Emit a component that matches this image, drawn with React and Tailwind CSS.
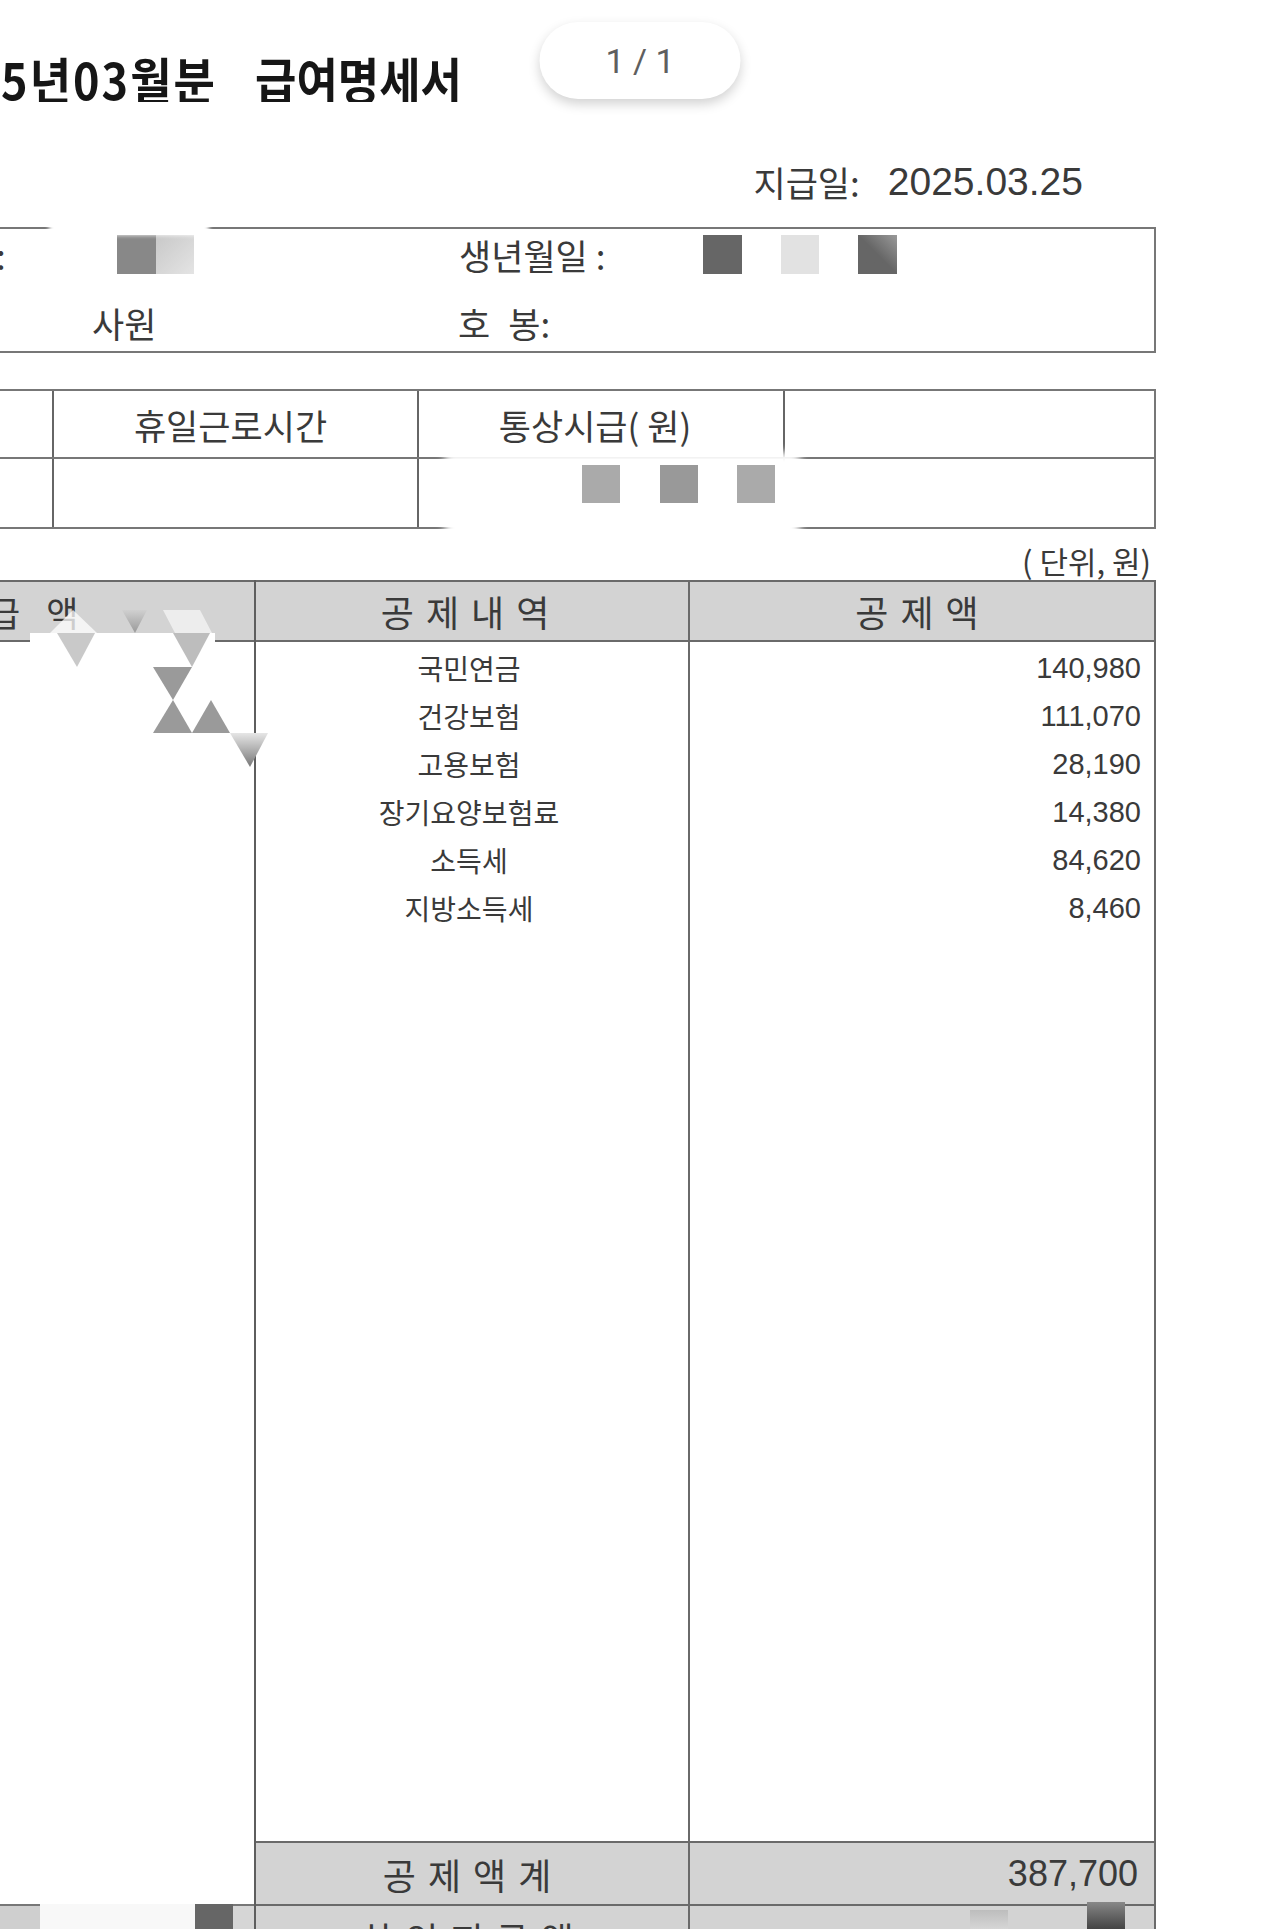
export default function App() {
  const rows = [
    ["국민연금", "140,980"],
    ["건강보험", "111,070"],
    ["고용보험", "28,190"],
    ["장기요양보험료", "14,380"],
    ["소득세", "84,620"],
    ["지방소득세", "8,460"],
  ];
  return (
    <div className="relative w-[1280px] h-[1929px] overflow-hidden bg-white text-[#3a3a3a] font-['Noto_Sans_CJK_KR',sans-serif]">
      <div className="w-[1156px]">
        {/* title */}
        <div className="h-[156px] pt-[54px]">
          <div className="w-[462px] h-[48px] overflow-hidden flex justify-end items-center whitespace-nowrap text-[45px] font-bold text-[#161616] leading-none">
            <span className="inline-block scale-y-[1.12]">
              <span className="tracking-[2px]">2025</span><span className="tracking-[2px]">년03월</span>분<span className="ml-[40px]">급여명세서</span>
            </span>
          </div>
        </div>

        {/* pay date */}
        <div className="h-[50px] flex items-center justify-end pr-[73px] whitespace-nowrap">
          <span className="text-[35px] leading-none">지급일:</span>
          <span className="ml-[28px] text-[39px] leading-none font-['Liberation_Sans',Arial,sans-serif]">2025.03.25</span>
        </div>

        {/* box 1 */}
        <div className="mt-[21px] h-[126px] border-t-2 border-b-2 border-r-2 border-[#777] flex flex-col">
          <div className="h-[50px] flex items-center whitespace-nowrap">
            <span className="w-[121px] -ml-[4px] text-[35px] leading-none">:</span>
            <div className="w-[39px] h-[39px] bg-[#888]" />
            <div className="w-[38px] h-[39px] bg-gradient-to-br from-[#c8c8c8] to-[#e4e4e4]" />
            <span className="ml-[265px] w-[244px] text-[35px] leading-none">생년월일 :</span>
            <div className="w-[39px] h-[39px] bg-[#666]" />
            <div className="ml-[39px] w-[38px] h-[39px] bg-[#e2e2e2]" />
            <div className="ml-[39px] w-[39px] h-[39px] bg-gradient-to-bl from-[#9a9a9a] via-[#666] to-[#666]" />
          </div>
          <div className="flex-1 pt-[14px] flex items-center whitespace-nowrap text-[35px] leading-none">
            <span className="ml-[92px] w-[366px]">사원</span>
            <span>호</span>
            <span className="ml-[18px]">봉:</span>
          </div>
        </div>

        {/* box 2 */}
        <div className="mt-[36px] border-t-2 border-b-2 border-[#777] text-[35px] leading-none">
          <div className="h-[68px] flex border-b-2 border-[#777]">
            <div className="w-[54px] border-r-2 border-[#666]" />
            <div className="w-[365px] border-r-2 border-[#666] flex items-center justify-center pr-[10px]">휴일근로시간</div>
            <div className="w-[366px] border-r-2 border-[#666] flex items-center justify-center pr-[12px] whitespace-nowrap">통상시급( 원)</div>
            <div className="flex-1 border-r-2 border-[#777]" />
          </div>
          <div className="h-[68px] flex">
            <div className="w-[54px] border-r-2 border-[#666]" />
            <div className="w-[365px] border-r-2 border-[#666]" />
            <div className="w-[366px] border-r-2 border-[#666] flex items-start pt-[6px] pl-[163px]">
              <div className="relative z-10 w-[38px] h-[38px] bg-[#aaa]" />
              <div className="relative z-10 ml-[40px] w-[38px] h-[38px] bg-[#999]" />
              <div className="relative z-10 ml-[39px] w-[38px] h-[38px] bg-[#aaa]" />
            </div>
            <div className="flex-1 border-r-2 border-[#777]" />
          </div>
        </div>

        {/* unit */}
        <div className="h-[51px] pt-[12px] flex items-center justify-end pr-[5px] text-[31px] leading-none whitespace-nowrap">
          ( 단위, 원)
        </div>

        {/* main table */}
        <div className="flex">
          {/* col 1 */}
          <div className="w-[254px] flex flex-col">
            <div className="h-[62px] border-t-2 border-b-2 border-[#6a6a6a] bg-[#d3d3d3] flex items-center text-[35px] leading-none whitespace-nowrap">
              <span className="-ml-[12px]">급</span>
              <span className="ml-[26px]">액</span>
            </div>
            <div className="h-[1199px]" />
            <div className="h-[63px]" />
            <div className="h-[66px] flex">
              <div className="w-[40px] border-t-2 border-[#777] bg-[#cfcfcf]" />
              <div className="w-[155px] bg-[#f8f8f8]" />
              <div className="w-[38px] bg-[#666]" />
              <div className="flex-1 border-t-2 border-[#777] bg-[#d6d6d6]" />
            </div>
          </div>

          {/* col 2 */}
          <div className="w-[434px] border-l-2 border-[#5e5e5e] flex flex-col">
            <div className="h-[62px] border-t-2 border-b-2 border-[#6a6a6a] bg-[#d3d3d3] flex items-center justify-center gap-[12px] pr-[14px] text-[36px] leading-none">
              <span>공</span><span>제</span><span>내</span><span>역</span>
            </div>
            <div className="h-[1199px] pt-[2px]">
              {rows.map(([name]) => (
                <div key={name} className="h-[48px] flex items-center justify-center pr-[6px] text-[28px] leading-none">
                  {name}
                </div>
              ))}
            </div>
            <div className="h-[65px] border-t-2 border-b-2 border-[#6a6a6a] bg-[#d3d3d3] flex items-center justify-center gap-[12px] pr-[10px] text-[36px] leading-none">
              <span>공</span><span>제</span><span>액</span><span>계</span>
            </div>
            <div className="h-[64px] bg-[#d3d3d3] flex items-center justify-center gap-[12px] pr-[10px] text-[36px] leading-none">
              <span>차</span><span>인</span><span>지</span><span>급</span><span>액</span>
            </div>
          </div>

          {/* col 3 */}
          <div className="w-[468px] border-l-2 border-r-2 border-[#6a6a6a] flex flex-col">
            <div className="h-[62px] border-t-2 border-b-2 border-[#6a6a6a] bg-[#d3d3d3] flex items-center justify-center gap-[12px] pr-[10px] text-[36px] leading-none">
              <span>공</span><span>제</span><span>액</span>
            </div>
            <div className="h-[1199px] pt-[2px]">
              {rows.map(([name, amt]) => (
                <div key={name} className="h-[48px] flex items-center justify-end pr-[13px] text-[29px] leading-none font-['Liberation_Sans',Arial,sans-serif]">
                  {amt}
                </div>
              ))}
            </div>
            <div className="h-[65px] border-t-2 border-b-2 border-[#6a6a6a] bg-[#d3d3d3] flex items-center justify-end pr-[16px] text-[36px] leading-none font-['Liberation_Sans',Arial,sans-serif]">
              387,700
            </div>
            <div className="h-[64px] bg-[#d3d3d3]" />
          </div>
        </div>
      </div>

      {/* faded patches over lines */}
      <div className="absolute left-[49px] top-[221px] w-[160px] h-[14px] bg-white blur-[2px]" />
      <div className="absolute left-[445px] top-[452px] w-[355px] h-[88px] bg-white blur-[4px]" />

      {/* redaction mosaic over header */}
      <svg className="absolute left-0 top-[570px]" width="280" height="200" viewBox="0 0 280 200">
        <defs>
          <linearGradient id="g1" x1="0" y1="0" x2="0" y2="1">
            <stop offset="0" stopColor="#e6e6e6" />
            <stop offset="1" stopColor="#777" />
          </linearGradient>
          <linearGradient id="g2" x1="0" y1="0" x2="0" y2="1">
            <stop offset="0" stopColor="#d0d0d0" />
            <stop offset="1" stopColor="#999" />
          </linearGradient>
        </defs>
        <rect x="30" y="63" width="185" height="11" fill="#fff" />
        <polygon points="50,63 97,63 73,40" fill="#fff" opacity="0.75" />
        <polygon points="163,40 200,40 212,63 175,63" fill="#fff" opacity="0.6" />
        <polygon points="57,63 95,63 77,97" fill="#c9c9c9" />
        <polygon points="122,40 147,40 135,63" fill="url(#g2)" />
        <polygon points="173,63 210,63 192,97" fill="#bdbdbd" />
        <polygon points="153,97 192,97 173,130" fill="#9a9a9a" />
        <polygon points="153,163 192,163 173,130" fill="#9a9a9a" />
        <polygon points="192,163 230,163 211,130" fill="#9a9a9a" />
        <polygon points="230,163 268,163 250,197" fill="url(#g1)" />
      </svg>

      {/* bottom-right redaction */}
      <div className="absolute left-[970px] top-[1910px] w-[38px] h-[19px] bg-gradient-to-b from-[#bdbdbd] to-[#d6d6d6]" />
      <div className="absolute left-[1087px] top-[1902px] w-[38px] h-[27px] bg-gradient-to-b from-[#888] to-[#444]" />

      {/* page indicator */}
      <div className="absolute top-[22px] left-1/2 -translate-x-1/2 w-[201px] h-[77px] rounded-full bg-white shadow-[0_5px_12px_rgba(0,0,0,0.18)] flex items-center justify-center text-[34px] text-[#5f5f5f] font-['Roboto',sans-serif] leading-none">
        1 / 1
      </div>
    </div>
  );
}
